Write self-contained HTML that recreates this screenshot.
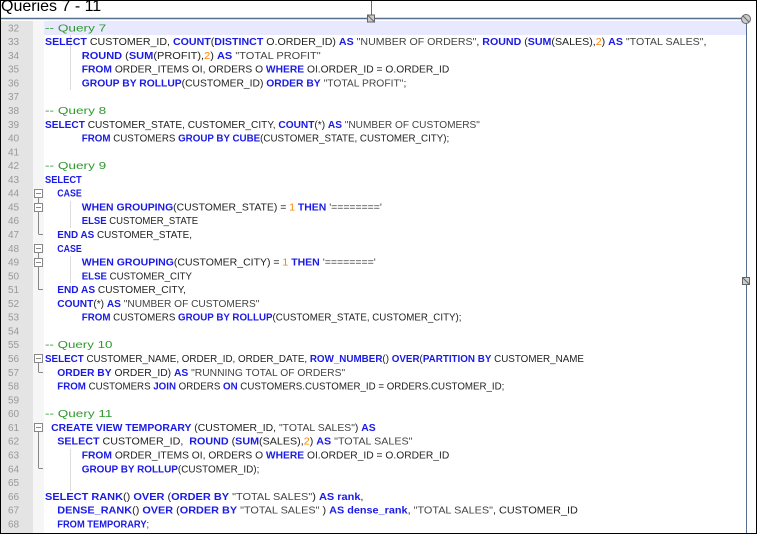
<!DOCTYPE html>
<html><head><meta charset="utf-8">
<style>
html,body{margin:0;padding:0;background:#fff}
#w{position:relative;width:755px;height:532px;border:1px solid #000;overflow:hidden;background:#fff}
.t{position:absolute;left:0;top:-3px;font-family:"Liberation Sans",sans-serif;font-size:16px;color:#000}
.g{position:absolute;left:0;top:20px;width:32px;height:520px;background:#e4e4e4}
.f{position:absolute;left:32px;top:20px;width:11px;height:520px;background:#f6f6f6}
.hl{position:absolute;left:43px;top:20px;width:702px;height:14px;background:#e8e8ff}
svg text{font-family:"Liberation Sans",sans-serif;font-size:10.5px;fill:#222;white-space:pre}
.k{fill:#1a1ae6;font-weight:bold}
.s{fill:#444}
.c{fill:#2e9a2e}
.o{fill:#ff8000}
.nm text{fill:#999;font-size:10px}
</style></head><body><div id="w">
<div class="t">Queries 7 - 11</div>
<div class="g"></div><div class="f"></div><div class="hl"></div>
<svg style="position:absolute;left:0;top:0" width="757" height="534">
<line x1="0" y1="17.5" x2="745" y2="17.5" stroke="#556f8c" stroke-width="1.5"/>
<line x1="370.5" y1="0" x2="370.5" y2="17" stroke="#556f8c"/>
<line x1="745.5" y1="17" x2="745.5" y2="534" stroke="#556f8c"/>
<rect x="366.5" y="14" width="7" height="7" fill="#ccc" stroke="#666"/>
<line x1="367" y1="14.5" x2="373" y2="20.5" stroke="#666"/>
<circle cx="745" cy="18" r="4.5" fill="#ccc" stroke="#666"/>
<line x1="742" y1="15" x2="748" y2="21" stroke="#666"/>
<rect x="741.5" y="276.5" width="7" height="7" fill="#ccc" stroke="#666"/>
<line x1="742" y1="277" x2="748" y2="283" stroke="#666"/>
<g stroke="#888" fill="#fff">
<rect x="33.5" y="188.5" width="8" height="8"/><line x1="35" y1="192.5" x2="40" y2="192.5"/>
<rect x="33.5" y="202.5" width="8" height="8"/><line x1="35" y1="206.5" x2="40" y2="206.5"/>
<line x1="37.5" y1="197" x2="37.5" y2="202"/><line x1="37.5" y1="211" x2="37.5" y2="233"/><line x1="37.5" y1="233.5" x2="42" y2="233.5"/>
<rect x="33.5" y="243.5" width="8" height="8"/><line x1="35" y1="247.5" x2="40" y2="247.5"/>
<rect x="33.5" y="257.5" width="8" height="8"/><line x1="35" y1="261.5" x2="40" y2="261.5"/>
<line x1="37.5" y1="252" x2="37.5" y2="257"/><line x1="37.5" y1="266" x2="37.5" y2="289"/><line x1="37.5" y1="288.5" x2="42" y2="288.5"/>
<rect x="33.5" y="353.5" width="8" height="8"/><line x1="35" y1="357.5" x2="40" y2="357.5"/>
<line x1="37.5" y1="362" x2="37.5" y2="371"/><line x1="37.5" y1="371.5" x2="42" y2="371.5"/>
<rect x="33.5" y="422.5" width="8" height="8"/><line x1="35" y1="426.5" x2="40" y2="426.5"/>
<line x1="37.5" y1="431" x2="37.5" y2="467"/><line x1="37.5" y1="467.5" x2="42" y2="467.5"/>
</g>
<g stroke="#ddd"><line x1="69.5" y1="34" x2="69.5" y2="89"/><line x1="69.5" y1="200" x2="69.5" y2="227"/><line x1="69.5" y1="255" x2="69.5" y2="282"/><line x1="69.5" y1="448" x2="69.5" y2="490"/></g>
<g class="nm">
<text x="7" y="30.3">32</text><text x="7" y="44.1">33</text><text x="7" y="57.9">34</text><text x="7" y="71.6">35</text><text x="7" y="85.4">36</text><text x="7" y="99.2">37</text><text x="7" y="113">38</text><text x="7" y="126.8">39</text><text x="7" y="140.5">40</text><text x="7" y="154.3">41</text><text x="7" y="168.1">42</text><text x="7" y="181.9">43</text><text x="7" y="195.7">44</text><text x="7" y="209.4">45</text><text x="7" y="223.2">46</text><text x="7" y="237">47</text><text x="7" y="250.8">48</text><text x="7" y="264.6">49</text><text x="7" y="278.3">50</text><text x="7" y="292.1">51</text><text x="7" y="305.9">52</text><text x="7" y="319.7">53</text><text x="7" y="333.5">54</text><text x="7" y="347.2">55</text><text x="7" y="361">56</text><text x="7" y="374.8">57</text><text x="7" y="388.6">58</text><text x="7" y="402.4">59</text><text x="7" y="416.1">60</text><text x="7" y="429.9">61</text><text x="7" y="443.7">62</text><text x="7" y="457.5">63</text><text x="7" y="471.3">64</text><text x="7" y="485">65</text><text x="7" y="498.8">66</text><text x="7" y="512.6">67</text><text x="7" y="526.4">68</text>
</g>
<g>
<text x="44" y="30.3" textLength="61.25" lengthAdjust="spacingAndGlyphs"><tspan class="c">-- Query 7</tspan></text>
<text x="44" y="44.1" textLength="661.5" lengthAdjust="spacingAndGlyphs"><tspan class="k">SELECT</tspan> CUSTOMER_ID, <tspan class="k">COUNT</tspan>(<tspan class="k">DISTINCT</tspan> O.ORDER_ID) <tspan class="k">AS</tspan> <tspan class="s">"NUMBER OF ORDERS"</tspan>, <tspan class="k">ROUND</tspan> (<tspan class="k">SUM</tspan>(SALES),<tspan class="o">2</tspan>) <tspan class="k">AS</tspan> <tspan class="s">"TOTAL SALES"</tspan>,</text>
<text x="80.75" y="57.9" textLength="238.9" lengthAdjust="spacingAndGlyphs"><tspan class="k">ROUND</tspan> (<tspan class="k">SUM</tspan>(PROFIT),<tspan class="o">2</tspan>) <tspan class="k">AS</tspan> <tspan class="s">"TOTAL PROFIT"</tspan></text>
<text x="80.75" y="71.6" textLength="367.5" lengthAdjust="spacingAndGlyphs"><tspan class="k">FROM</tspan> ORDER_ITEMS OI, ORDERS O <tspan class="k">WHERE</tspan> OI.ORDER_ID = O.ORDER_ID</text>
<text x="80.75" y="85.4" textLength="324.6" lengthAdjust="spacingAndGlyphs"><tspan class="k">GROUP BY ROLLUP</tspan>(CUSTOMER_ID) <tspan class="k">ORDER BY</tspan> <tspan class="s">"TOTAL PROFIT"</tspan>;</text>
<text x="44" y="113" textLength="61.25" lengthAdjust="spacingAndGlyphs"><tspan class="c">-- Query 8</tspan></text>
<text x="44" y="126.8" textLength="434.9" lengthAdjust="spacingAndGlyphs"><tspan class="k">SELECT</tspan> CUSTOMER_STATE, CUSTOMER_CITY, <tspan class="k">COUNT</tspan>(*) <tspan class="k">AS</tspan> <tspan class="s">"NUMBER OF CUSTOMERS"</tspan></text>
<text x="80.75" y="140.5" textLength="367.5" lengthAdjust="spacingAndGlyphs"><tspan class="k">FROM</tspan> CUSTOMERS <tspan class="k">GROUP BY CUBE</tspan>(CUSTOMER_STATE, CUSTOMER_CITY);</text>
<text x="44" y="168.1" textLength="61.25" lengthAdjust="spacingAndGlyphs"><tspan class="c">-- Query 9</tspan></text>
<text x="44" y="181.9" textLength="36.75" lengthAdjust="spacingAndGlyphs"><tspan class="k">SELECT</tspan></text>
<text x="56.25" y="195.7" textLength="24.5" lengthAdjust="spacingAndGlyphs"><tspan class="k">CASE</tspan></text>
<text x="80.75" y="209.4" textLength="300.1" lengthAdjust="spacingAndGlyphs"><tspan class="k">WHEN GROUPING</tspan>(CUSTOMER_STATE) = <tspan class="o">1</tspan> <tspan class="k">THEN</tspan> <tspan class="s">'========'</tspan></text>
<text x="80.75" y="223.2" textLength="116.4" lengthAdjust="spacingAndGlyphs"><tspan class="k">ELSE</tspan> CUSTOMER_STATE</text>
<text x="56.25" y="237" textLength="134.75" lengthAdjust="spacingAndGlyphs"><tspan class="k">END AS</tspan> CUSTOMER_STATE,</text>
<text x="56.25" y="250.8" textLength="24.5" lengthAdjust="spacingAndGlyphs"><tspan class="k">CASE</tspan></text>
<text x="80.75" y="264.6" textLength="294" lengthAdjust="spacingAndGlyphs"><tspan class="k">WHEN GROUPING</tspan>(CUSTOMER_CITY) = <tspan class="o">1</tspan> <tspan class="k">THEN</tspan> <tspan class="s">'========'</tspan></text>
<text x="80.75" y="278.3" textLength="110.25" lengthAdjust="spacingAndGlyphs"><tspan class="k">ELSE</tspan> CUSTOMER_CITY</text>
<text x="56.25" y="292.1" textLength="128.6" lengthAdjust="spacingAndGlyphs"><tspan class="k">END AS</tspan> CUSTOMER_CITY,</text>
<text x="56.25" y="305.9" textLength="202.1" lengthAdjust="spacingAndGlyphs"><tspan class="k">COUNT</tspan>(*) <tspan class="k">AS</tspan> <tspan class="s">"NUMBER OF CUSTOMERS"</tspan></text>
<text x="80.75" y="319.7" textLength="379.75" lengthAdjust="spacingAndGlyphs"><tspan class="k">FROM</tspan> CUSTOMERS <tspan class="k">GROUP BY ROLLUP</tspan>(CUSTOMER_STATE, CUSTOMER_CITY);</text>
<text x="44" y="347.2" textLength="67.4" lengthAdjust="spacingAndGlyphs"><tspan class="c">-- Query 10</tspan></text>
<text x="44" y="361" textLength="539" lengthAdjust="spacingAndGlyphs"><tspan class="k">SELECT</tspan> CUSTOMER_NAME, ORDER_ID, ORDER_DATE, <tspan class="k">ROW_NUMBER</tspan>() <tspan class="k">OVER</tspan>(<tspan class="k">PARTITION BY</tspan> CUSTOMER_NAME</text>
<text x="56.25" y="374.8" textLength="287.9" lengthAdjust="spacingAndGlyphs"><tspan class="k">ORDER BY</tspan> ORDER_ID) <tspan class="k">AS</tspan> <tspan class="s">"RUNNING TOTAL OF ORDERS"</tspan></text>
<text x="56.25" y="388.6" textLength="447.1" lengthAdjust="spacingAndGlyphs"><tspan class="k">FROM</tspan> CUSTOMERS <tspan class="k">JOIN</tspan> ORDERS <tspan class="k">ON</tspan> CUSTOMERS.CUSTOMER_ID = ORDERS.CUSTOMER_ID;</text>
<text x="44" y="416.1" textLength="67.4" lengthAdjust="spacingAndGlyphs"><tspan class="c">-- Query 11</tspan></text>
<text x="50.1" y="429.9" textLength="324.6" lengthAdjust="spacingAndGlyphs"><tspan class="k">CREATE VIEW TEMPORARY</tspan> (CUSTOMER_ID, <tspan class="s">"TOTAL SALES"</tspan>) <tspan class="k">AS</tspan></text>
<text x="56.25" y="443.7" textLength="355.25" lengthAdjust="spacingAndGlyphs"><tspan class="k">SELECT</tspan> CUSTOMER_ID,  <tspan class="k">ROUND</tspan> (<tspan class="k">SUM</tspan>(SALES),<tspan class="o">2</tspan>) <tspan class="k">AS</tspan> <tspan class="s">"TOTAL SALES"</tspan></text>
<text x="80.75" y="457.5" textLength="367.5" lengthAdjust="spacingAndGlyphs"><tspan class="k">FROM</tspan> ORDER_ITEMS OI, ORDERS O <tspan class="k">WHERE</tspan> OI.ORDER_ID = O.ORDER_ID</text>
<text x="80.75" y="471.3" textLength="177.6" lengthAdjust="spacingAndGlyphs"><tspan class="k">GROUP BY ROLLUP</tspan>(CUSTOMER_ID);</text>
<text x="44" y="498.8" textLength="318.5" lengthAdjust="spacingAndGlyphs"><tspan class="k">SELECT RANK</tspan>() <tspan class="k">OVER</tspan> (<tspan class="k">ORDER BY</tspan> <tspan class="s">"TOTAL SALES"</tspan>) <tspan class="k">AS</tspan> <tspan class="k">rank</tspan>,</text>
<text x="56.25" y="512.6" textLength="520.6" lengthAdjust="spacingAndGlyphs"><tspan class="k">DENSE_RANK</tspan>() <tspan class="k">OVER</tspan> (<tspan class="k">ORDER BY</tspan> <tspan class="s">"TOTAL SALES"</tspan> ) <tspan class="k">AS</tspan> <tspan class="k">dense_rank</tspan>, <tspan class="s">"TOTAL SALES"</tspan>, CUSTOMER_ID</text>
<text x="56.25" y="526.4" textLength="91.9" lengthAdjust="spacingAndGlyphs"><tspan class="k">FROM TEMPORARY</tspan>;</text>
</g>
</svg>
</div></body></html>
